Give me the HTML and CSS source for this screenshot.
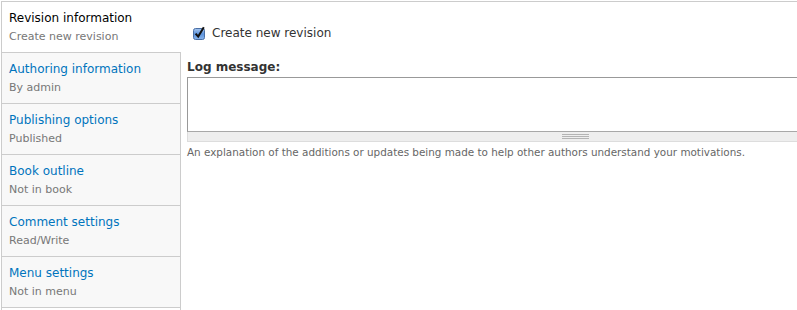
FILE: index.html
```html
<!DOCTYPE html>
<html lang="en">
<head>
    <meta charset="UTF-8">
    <title>Revision information</title>
    <link rel="stylesheet" href="styles.css">
</head>
<body>
    <div class="vertical-tabs">
        <ul class="tabs-list">
            <li class="tab selected">
                <a href="#revision"><strong>Revision information</strong><span class="summary">Create new revision</span></a>
            </li>
            <li class="tab">
                <a href="#author"><strong>Authoring information</strong><span class="summary">By admin</span></a>
            </li>
            <li class="tab">
                <a href="#options"><strong>Publishing options</strong><span class="summary">Published</span></a>
            </li>
            <li class="tab">
                <a href="#book"><strong>Book outline</strong><span class="summary">Not in book</span></a>
            </li>
            <li class="tab">
                <a href="#comment"><strong>Comment settings</strong><span class="summary">Read/Write</span></a>
            </li>
            <li class="tab">
                <a href="#menu"><strong>Menu settings</strong><span class="summary">Not in menu</span></a>
            </li>
        </ul>
        <div class="tabs-panes">
            <div class="form-item form-type-checkbox">
                <svg class="checkbox" width="15" height="15" viewBox="0 0 15 15">
                    <defs>
                        <linearGradient id="cb" x1="0" y1="0" x2="0" y2="1">
                            <stop offset="0" stop-color="#a9c8f0"/>
                            <stop offset="0.5" stop-color="#5d93dc"/>
                            <stop offset="1" stop-color="#8ab6ee"/>
                        </linearGradient>
                    </defs>
                    <rect x="1.5" y="2.5" width="11" height="11" rx="2" fill="url(#cb)" stroke="#4a6fa5"/>
                    <path d="M3.6 7.6 L6.2 10.6 L11.8 1.2" fill="none" stroke="#111" stroke-width="2"/>
                </svg>
                <label class="option">Create new revision</label>
            </div>
            <div class="form-item form-type-textarea">
                <label class="field-label">Log message:</label>
                <div class="resizable">
                    <textarea class="log"></textarea>
                    <div class="grippie"></div>
                </div>
                <div class="description">An explanation of the additions or updates being made to help other authors understand your motivations.</div>
            </div>
        </div>
    </div>
</body>
</html>
```

FILE: styles.css
```css
body {
    font-family: "DejaVu Sans", Verdana, sans-serif;
    font-size: 12px;
    color: #333;
    background-color: #fff;
    margin: 0;
    overflow: hidden;
}
.vertical-tabs {
    display: flex;
    margin: 1px 0 0 1px;
    border-top: 1px solid #ccc;
    border-left: 1px solid #ccc;
    height: 320px;
}
.tabs-list {
    list-style: none;
    margin: 0;
    padding: 0;
    width: 178px;
    flex-shrink: 0;
    border-right: 1px solid #ccc;
}
.tab {
    background-color: #f8f8f8;
    border-bottom: 1px solid #ccc;
}
.tab.selected {
    background-color: #fff;
    margin-right: -1px;
}
.tab a {
    display: block;
    height: 43px;
    padding: 6px 8px 1px 7px;
    text-decoration: none;
}
.tab strong {
    display: block;
    font-weight: normal;
    line-height: 20px;
    color: #0074bd;
}
.tab.selected strong {
    color: #000;
}
.summary {
    display: block;
    font-size: 11px;
    line-height: 18px;
    color: #777;
}
.tabs-panes {
    flex: 1;
    padding: 22px 0 0 6px;
}
.form-type-checkbox {
    display: flex;
    align-items: center;
    height: 18px;
    margin-left: 5px;
}
.checkbox {
    margin-right: 5px;
}
.option {
    line-height: 18px;
}
.form-type-textarea {
    margin-top: 16px;
}
.field-label {
    display: block;
    font-weight: bold;
    line-height: 18px;
    margin-bottom: 1px;
}
.resizable {
    width: 776px;
}
.log {
    display: block;
    box-sizing: border-box;
    width: 776px;
    height: 55px;
    margin: 0;
    border: 1px solid #999;
    border-bottom-color: #a8a8a8;
    resize: none;
}
.grippie {
    position: relative;
    height: 9px;
    background-color: #eee;
    border: 1px solid #ddd;
    border-top: none;
}
.grippie::after {
    content: "";
    position: absolute;
    left: 374px;
    top: 2px;
    width: 27px;
    height: 5px;
    background: repeating-linear-gradient(#b4b4b4 0, #b4b4b4 1px, transparent 1px, transparent 2px);
}
.description {
    margin-top: 2px;
    font-size: 10.4px;
    line-height: 16px;
    color: #666;
}
```
